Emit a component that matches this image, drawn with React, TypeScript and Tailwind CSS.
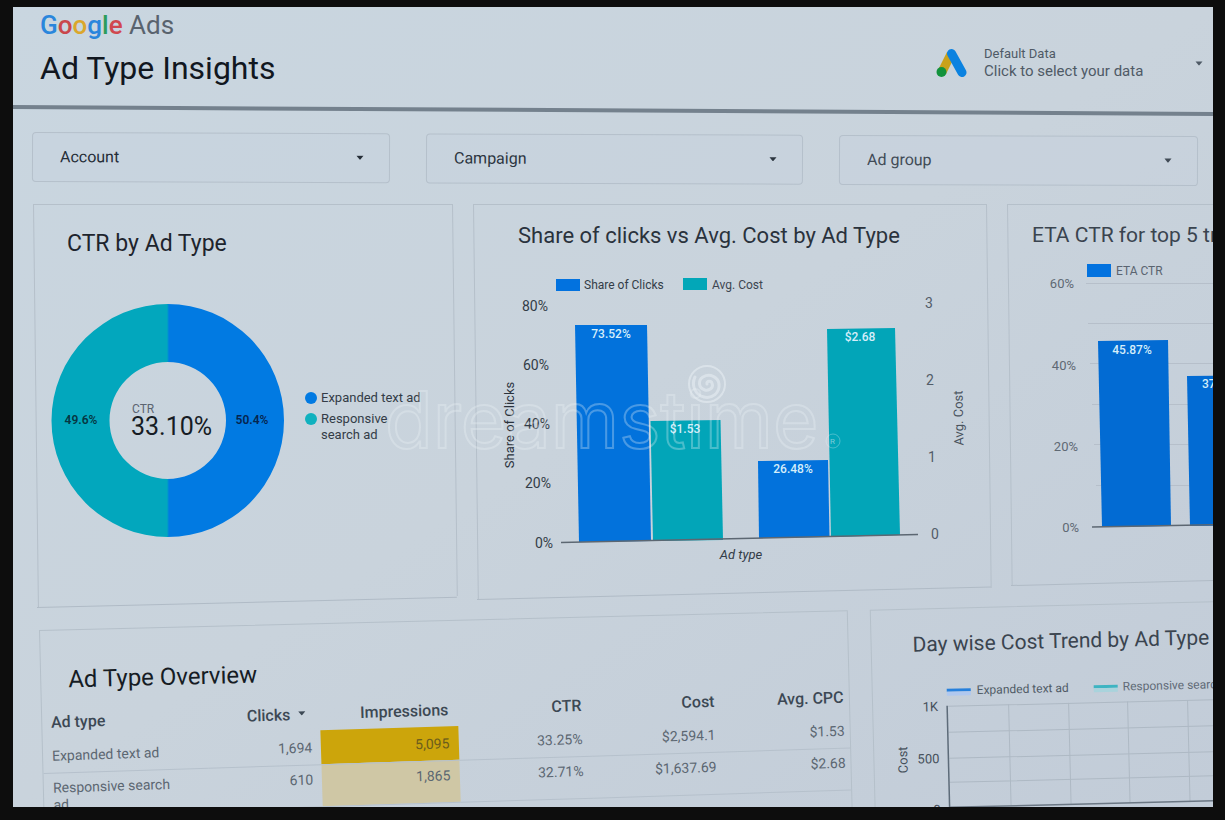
import React from "react";

const SANS = "font-['Roboto','Liberation_Sans',sans-serif]";

function Caret({ className = "" }: { className?: string }) {
  return (
    <svg viewBox="0 0 8 5" className={`h-[5px] w-2 ${className}`} aria-hidden="true">
      <path d="M0.5 0.5h7L4.6 4.1q-.6.7-1.2 0z" fill="currentColor" />
    </svg>
  );
}

function Filter({ id, label, tone }: { id: string; label: string; tone: string }) {
  return (
    <div className={`relative ${tone}`}>
      <select
        id={id}
        aria-label={label}
        className="h-[50px] w-full appearance-none rounded border border-[#b5c0cb] bg-[#c9d3de]/40 px-[27px] text-base outline-none"
      >
        <option>{label}</option>
      </select>
      <Caret className="pointer-events-none absolute right-[26px] top-[22px]" />
    </div>
  );
}

function Frame() {
  return (
    <div className="pointer-events-none absolute inset-0" aria-hidden="true">
      <div className="absolute inset-0 origin-top skew-x-[0.7deg] border-l border-t border-[#b5c0ca]" />
      <div className="absolute bottom-3 right-0 top-0 w-px origin-top skew-x-[0.7deg] bg-[#b5c0ca]" />
      <div className="absolute -right-1 bottom-0 left-1 h-px origin-left -rotate-[1.4deg] bg-[#b0bbc6]" />
    </div>
  );
}

function CtrCard() {
  return (
    <section className="relative h-[404px] pt-6">
      <Frame />
      <h2 className="pl-[34px] text-[23px] leading-8 text-[#1d242d]">CTR by Ad Type</h2>
      <div className="mt-[43px] flex items-center gap-5 pl-[18px]">
        <svg viewBox="50 303 234 234" className="h-[234px] w-[234px] shrink-0" role="img" aria-label="CTR by ad type">
          <path d="M166.500 304a116 116 0 0 1 0 233v-58a58.500 58.500 0 0 0 0-117z" fill="#017ae2" />
          <path d="M167 304a116 116 0 0 0 0 233v-58a58.500 58.500 0 0 1 0-117z" fill="#02a7bd" />
          <path d="M167 304v58M167 479v58" stroke="#0191d0" strokeWidth="1" />
          <text x="131" y="413" fontSize="12" fill="#5b6470">CTR</text>
          <text x="130" y="435" fontSize="25" fill="#161c24">33.10%</text>
          <text x="80" y="424" fontSize="12" fontWeight="600" textAnchor="middle" fill="#063642">49.6%</text>
          <text x="251" y="424" fontSize="12" fontWeight="600" textAnchor="middle" fill="#06254f">50.4%</text>
        </svg>
        <ul className="w-[125px] pb-2 text-[13px] leading-4 text-[#333c47]">
          <li className="flex gap-1">
            <span className="mt-[2px] size-3 shrink-0 rounded-full bg-[#017ae2]" />
            <span className="whitespace-nowrap">Expanded text ad</span>
          </li>
          <li className="mt-[5px] flex gap-1">
            <span className="mt-[2px] size-3 shrink-0 rounded-full bg-[#10b1bf]" />
            <span className="w-[80px]">Responsive search ad</span>
          </li>
        </ul>
      </div>
    </section>
  );
}

function ShareCard() {
  const left: [string, number, number][] = [
    ["80%", 548, 312],
    ["60%", 549, 371],
    ["40%", 550, 430],
    ["20%", 551, 489],
    ["0%", 553, 549],
  ];
  const right: [string, number, number][] = [
    ["3", 929, 309],
    ["2", 930, 386],
    ["1", 932, 463],
    ["0", 935, 540],
  ];
  return (
    <section className="relative h-[396px] pt-4">
      <Frame />
      <h2 className="whitespace-nowrap pl-[45px] text-[22px] leading-8 text-[#2a323c]">
        Share of clicks vs Avg. Cost by Ad Type
      </h2>
      <svg viewBox="485 270 500 310" className="ml-3 mt-[17px] h-[310px] w-[500px]" role="img" aria-label="Share of clicks and average cost">
        <rect x="556" y="280" width="24" height="12" fill="#0272df" />
        <text x="584" y="290" fontSize="12" fill="#333c47">Share of Clicks</text>
        <rect x="683" y="279" width="24" height="12" fill="#02a7b8" />
        <text x="712" y="290" fontSize="12" fill="#3d4651">Avg. Cost</text>
        <path d="M575 326L647 326L651 542L579 543Z" fill="#0272dc" />
        <path d="M650.500 422L720.500 421L723 541L653 542Z" fill="#02a5b8" />
        <path d="M758 462L828 461L829.500 538L759 539Z" fill="#0272dc" />
        <path d="M827 330L895 329L900 536L831 538Z" fill="#02a5b8" />
        <path d="M561 543.500L918 535.500" stroke="#5c6772" strokeWidth="1.500" />
        <g fontSize="14" fill="#333c47" textAnchor="end">
          {left.map(([t, x, y]) => (
            <text key={t} x={x} y={y}>{t}</text>
          ))}
        </g>
        <g fontSize="14" fill="#535d69" textAnchor="middle">
          {right.map(([t, x, y]) => (
            <text key={t} x={x} y={y}>{t}</text>
          ))}
        </g>
        <g fontSize="12" fontWeight="500" fill="#d5eefa" textAnchor="middle">
          <text x="611" y="339">73.52%</text>
          <text x="685" y="434">$1.53</text>
          <text x="793" y="474">26.48%</text>
          <text x="860" y="342">$2.68</text>
        </g>
        <text transform="translate(514 426) rotate(-90)" fontSize="13" fill="#2a323c" textAnchor="middle">Share of Clicks</text>
        <text transform="translate(963 419) rotate(-91)" fontSize="13" fill="#4a545f" textAnchor="middle">Avg. Cost</text>
        <text x="741" y="560" fontSize="13" fontStyle="italic" fill="#333c47" textAnchor="middle">Ad type</text>
      </svg>
    </section>
  );
}

function EtaCard() {
  const labels: [string, number, number][] = [
    ["60%", 1074, 289],
    ["40%", 1076, 371],
    ["20%", 1078, 452],
    ["0%", 1079, 533],
  ];
  return (
    <section className="relative h-[382px] pt-[15px]">
      <Frame />
      <h2 className="whitespace-nowrap pl-[25px] text-[21px] leading-8 text-[#3a444f]">
        ETA CTR for top 5 transactions
      </h2>
      <svg viewBox="1020 260 240 300" className="ml-[13px] mt-2 h-[300px] w-[240px]" role="img" aria-label="ETA CTR">
        <g stroke="#b6bfca" strokeWidth="1">
          {[284.5, 324.5, 364.5, 405.5, 445.5, 486.5].map((y, i) => (
            <path key={y} d={`M${1086 + i * 2} ${y}H1260`} />
          ))}
        </g>
        <rect x="1087" y="265" width="24" height="13" fill="#0272df" />
        <text x="1116" y="276" fontSize="12" fill="#5a6470">ETA CTR</text>
        <path d="M1098 342L1168 341L1171 527L1102 528Z" fill="#026bd3" />
        <path d="M1187 377L1260 376L1260 526L1190 527Z" fill="#026bd3" />
        <path d="M1092 528L1260 525" stroke="#5c6772" strokeWidth="1.500" />
        <g fontSize="12" fontWeight="500" fill="#d5eefa">
          <text x="1132" y="355" textAnchor="middle">45.87%</text>
          <text x="1202" y="389">37.5%</text>
        </g>
        <g fontSize="13" fill="#5f6974" textAnchor="end">
          {labels.map(([t, x, y]) => (
            <text key={t} x={x} y={y}>{t}</text>
          ))}
        </g>
      </svg>
    </section>
  );
}

function OverviewCard() {
  return (
    <section className="border border-[#b5c0ca] pt-[33px]">
      <h2 className="pl-[27px] text-2xl leading-8 text-[#161c24]">Ad Type Overview</h2>
      <table className="mt-[11px] w-full origin-left -rotate-[0.4deg] table-fixed border-collapse text-right">
        <colgroup>
          <col className="w-[20.5%]" />
          <col className="w-[14%]" />
          <col className="w-[17%]" />
          <col className="w-[16.5%]" />
          <col className="w-[16.5%]" />
          <col className="w-[15.5%]" />
        </colgroup>
        <thead className="text-base text-[#3c4854]">
          <tr className="h-8">
            <th className="pl-[9px] text-left font-medium">Ad type</th>
            <th className="whitespace-nowrap pr-[14px] font-medium">
              Clicks <Caret className="mb-1 ml-1 inline-block" />
            </th>
            <th className="pr-[9px] font-medium">Impressions</th>
            <th className="pr-[9px] font-medium">CTR</th>
            <th className="pr-[9px] font-medium">Cost</th>
            <th className="pr-[5px] font-medium">Avg. CPC</th>
          </tr>
        </thead>
        <tbody className="text-sm text-[#5c6772]">
          <tr className="h-[34px] border-b border-[#b6c1cc]">
            <td className="pl-[9px] text-left">Expanded text ad</td>
            <td className="pr-[9px]">1,694</td>
            <td className="bg-[#cca50b] pr-[9px] text-[#6c5d1c]">5,095</td>
            <td className="pr-[9px]">33.25%</td>
            <td className="pr-[9px]">$2,594.1</td>
            <td className="pr-[5px]">$1.53</td>
          </tr>
          <tr className="h-[42px] border-b border-[#b6c1cc] align-top leading-[17px]">
            <td className="pl-[9px] pr-8 pt-[6px] text-left">Responsive search ad</td>
            <td className="pr-[9px] pt-[6px]">610</td>
            <td className="bg-[#cfc7a5] pr-[9px] pt-[6px]">1,865</td>
            <td className="pr-[9px] pt-[6px]">32.71%</td>
            <td className="pr-[9px] pt-[6px]">$1,637.69</td>
            <td className="pr-[5px] pt-[6px]">$2.68</td>
          </tr>
        </tbody>
      </table>
    </section>
  );
}

function TrendCard() {
  return (
    <section className="border border-[#b5c0ca] pt-[19px]">
      <h2 className="whitespace-nowrap pl-[41px] text-[21px] leading-8 text-[#3a444f]">
        Day wise Cost Trend by Ad Type
      </h2>
      <svg viewBox="833 68 380 160" className="mt-[18px] h-[160px] w-[380px]" role="img" aria-label="Day wise cost trend">
        <rect x="907" y="79" width="24" height="3" fill="#2680dc" />
        <rect x="907" y="82" width="24" height="4" fill="#b0c8ef" />
        <text x="937" y="85" fontSize="12" fill="#505b66">Expanded text ad</text>
        <rect x="1054" y="79" width="24" height="3" fill="#3eb4c2" />
        <rect x="1054" y="82" width="24" height="4" fill="#a9d3dc" />
        <text x="1083" y="85" fontSize="12" fill="#606a76">Responsive search ad</text>
        <g stroke="#aeb9c4" strokeWidth="1">
          <path d="M908 96.500H1213M908 122.500H1213M908 148.500H1213M908 172.500H1213" />
          <path d="M968.500 96V197M1028.500 96V197M1087.500 96V197M1147.500 96V197M1207.500 96V197" />
        </g>
        <path d="M907 96V220" stroke="#5d6b79" strokeWidth="1.500" />
        <path d="M907 197.500H1213" stroke="#6b7784" strokeWidth="1.500" />
        <g fontSize="13" fill="#46505b" textAnchor="end">
          <text x="898" y="101">1K</text>
          <text x="898" y="153">500</text>
          <text x="898" y="204">0</text>
        </g>
        <text transform="translate(866 149) rotate(-90)" fontSize="13" fill="#46505b" textAnchor="middle">Cost</text>
      </svg>
    </section>
  );
}

function Watermark() {
  return (
    <svg
      viewBox="380 350 480 120"
      className="pointer-events-none absolute left-[367px] top-[343px] h-[120px] w-[480px]"
      aria-hidden="true"
      fill="none"
    >
      <text x="385" y="448" fontSize="78" className="font-['Inter',sans-serif]" stroke="#eef4f8" strokeOpacity="0.3" strokeWidth="2">
        dreamstime
      </text>
      <circle cx="833" cy="441" r="7" stroke="#eef4f8" strokeOpacity="0.3" />
      <text x="830" y="444" fontSize="8" fill="#eef4f8" fillOpacity="0.5">R</text>
      <g stroke="#e6ecf1" strokeOpacity="0.6" strokeLinecap="round">
        <circle cx="707" cy="384" r="18" strokeWidth="2" />
        <path
          d="M707 384c-1-3 4-4 5-1c2 5-3 8-7 7c-7-2-7-10-2-13c7-4 15 0 16 7c1 9-7 15-15 13c-9-2-13-12-9-20"
          strokeWidth="3"
        />
      </g>
    </svg>
  );
}

export default function App() {
  return (
    <div className={`h-screen min-h-[600px] bg-[#0d0d0d] pb-[13px] pl-[13px] pr-3 pt-[7px] ${SANS}`}>
      <main className="relative flex h-full flex-col overflow-hidden bg-linear-to-br from-[#c9d6e0] via-[#c9d3dc] to-[#c2ccd8]">
        <header className="flex h-[98px] shrink-0 items-start justify-between pl-[27px] pr-[10px]">
          <div>
            <p className="text-[26px] leading-9 text-[#59636e]">
              <span className="font-medium">
                <span className="text-[#2a86dc]">G</span>
                <span className="text-[#c9474c]">o</span>
                <span className="text-[#dba72c]">o</span>
                <span className="text-[#2a86dc]">g</span>
                <span className="text-[#2c9c5c]">l</span>
                <span className="text-[#d0484f]">e</span>
              </span>{" "}
              Ads
            </p>
            <h1 className="mt-[5px] text-[32px] leading-10 text-[#11171f]">Ad Type Insights</h1>
          </div>
          <button type="button" className="mt-[39px] flex w-[267px] items-center text-left text-[#4f5a66]">
            <svg viewBox="0 0 32 32" className="size-8 shrink-0" aria-hidden="true">
              <path d="M15 7L6 25" stroke="#c9a21b" strokeWidth="9" />
              <path d="M15.500 6.500L26 25.500" stroke="#0b82e0" strokeWidth="9" strokeLinecap="round" />
              <circle cx="5.500" cy="25" r="5" fill="#12923c" />
            </svg>
            <span className="ml-4 flex-1">
              <span className="block text-[13px] leading-4">Default Data</span>
              <span className="block text-[15px] leading-[18px]">Click to select your data</span>
            </span>
            <Caret />
          </button>
        </header>
        <div className="h-1 w-full shrink-0 origin-left rotate-[0.33deg] bg-[#74818d]" />

        <div className="mt-[23px] grid shrink-0 origin-left rotate-[0.2deg] grid-cols-[358fr_377fr_359fr] gap-9 pl-[19px] pr-[15px]">
          <Filter id="account" label="Account" tone="text-[#252d37]" />
          <Filter id="campaign" label="Campaign" tone="text-[#2c353f]" />
          <Filter id="ad-group" label="Ad group" tone="text-[#414b56]" />
        </div>

        <div className="-mr-10 ml-5 mt-[22px] grid h-[404px] shrink-0 grid-cols-[minmax(0,420fr)_minmax(0,514fr)_minmax(0,246fr)] items-start gap-5">
          <CtrCard />
          <ShareCard />
          <EtaCard />
        </div>

        <div className="-mr-10 ml-[26px] mt-[22px] grid h-[220px] shrink-0 origin-top-left -rotate-[1.4deg] grid-cols-[809fr_383fr] gap-[22px]">
          <OverviewCard />
          <TrendCard />
        </div>
        <Watermark />
      </main>
    </div>
  );
}
